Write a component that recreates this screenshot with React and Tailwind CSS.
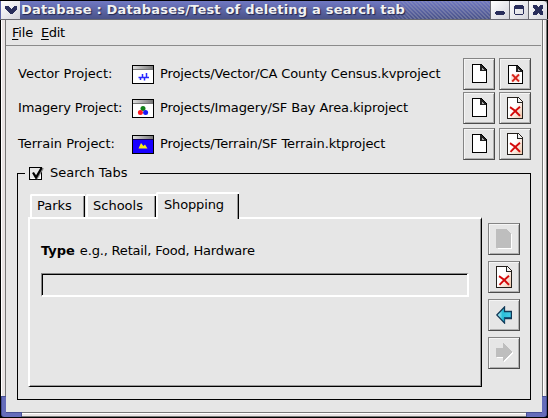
import React from "react";

function Button({ children }) {
  return (
    <button className="flex h-8 w-8 shrink-0 items-center justify-center border border-t-[#858585] border-l-[#858585] border-r-[#4c4c4c] border-b-[#4c4c4c] bg-[#e6e6e6] shadow-[inset_1px_1px_0_#f5f5f5,inset_-1px_-1px_0_#b0b0b0]">
      {children}
    </button>
  );
}

function Svg({ w, h, children, className = "" }) {
  return (
    <svg width={w} height={h} viewBox={`0 0 ${w} ${h}`} shapeRendering="crispEdges" className={`block shrink-0 ${className}`}>
      {children}
    </svg>
  );
}

function NewPage() {
  return (
    <Svg w={16} h={20}>
      <path d="M1.5 .5H10.5L15.5 5.5V18.5H1.5Z" fill="white" stroke="black" />
      <path d="M9 1H10L15 6V7H9Z" fill="#222" />
      <path d="M11 4h1v1h1v1h-2Z" fill="#aaa" />
    </Svg>
  );
}

function SmallDelete() {
  return (
    <Svg w={16} h={20}>
      <path d="M1.5 1.5H10.5L15.5 6.5V19.5H1.5Z" fill="white" stroke="black" />
      <path d="M9 2H10L15 7V8H9Z" fill="#222" />
      <path d="M11 5h1v1h1v1h-2Z" fill="#aaa" />
      <rect x="4" y="10" width="9" height="8" fill="#fbe9e2" />
      <path d="M5.2 10.5L12 17.5M12 10.5L5.2 17.5" stroke="#d8261c" strokeWidth="1.8" shapeRendering="auto" />
    </Svg>
  );
}

function LargeDelete() {
  return (
    <Svg w={16} h={22}>
      <defs>
        <linearGradient id="paper" x1=".1" y1=".2" x2="1" y2="1">
          <stop offset=".35" stopColor="#fff" />
          <stop offset="1" stopColor="#efc3a5" />
        </linearGradient>
      </defs>
      <path d="M.5 .5H11.5L15.5 4.5V21.5H.5Z" fill="url(#paper)" stroke="#241f1b" />
      <path d="M10.5 1V5.5H15" fill="none" stroke="#222" />
      <path d="M11 2L14 5H11Z" fill="#eee" />
      <path d="M3 10.2Q8 13 13 18.8M13 9.8Q8 14 3.5 18.8" fill="none" stroke="#d40a0a" strokeWidth="1.9" shapeRendering="auto" />
    </Svg>
  );
}

function DisabledPage() {
  return (
    <Svg w={16} h={20}>
      <path d="M2 1H11L16 6V20H2Z" fill="white" />
      <path d="M0 0H10L15 5V19H0Z" fill="#bebebe" />
    </Svg>
  );
}

function BackArrow() {
  return (
    <Svg w={16} h={18}>
      <defs>
        <linearGradient id="cyan">
          <stop stopColor="#d0f9ff" />
          <stop offset=".4" stopColor="#28bfd9" />
          <stop offset="1" stopColor="#49cce8" />
        </linearGradient>
      </defs>
      <path d="M.8 9L8.5 1V5.5H15.4V12.5H8.5V17Z" fill="url(#cyan)" stroke="#123957" strokeWidth="1.3" shapeRendering="auto" />
      <path d="M8 11.5H14.5M8.5 12V16" stroke="#10557c" />
    </Svg>
  );
}

function ForwardArrow() {
  return (
    <Svg w={18} h={20} className="translate-x-px">
      <path d="M1 6H8V1L17 10L8 19V15H1Z" fill="white" />
      <path d="M0 5H7V0L16 9L7 18V14H0Z" fill="#bebebe" />
    </Svg>
  );
}

function ProjectIcon({ kind }) {
  return (
    <Svg w={22} h={19} className="ml-auto">
      <defs>
        <linearGradient id="caption">
          <stop stopColor="#ddd" />
          <stop offset="1" stopColor="#777" />
        </linearGradient>
      </defs>
      <rect x=".5" y=".5" width="21" height="18" fill={kind === "terrain" ? "#1800ff" : "white"} stroke="black" />
      <rect x="1" y="1" width="20" height="3" fill="url(#caption)" />
      <path d="M1 4.5H21" stroke={kind === "terrain" ? "#120060" : "#777"} />
      {kind === "vector" && (
        <path d="M6.5 12.5H17M8.5 12V15M10.5 9V13M12.5 12V15.5M14.5 8V13" fill="none" stroke="#2828ff" strokeWidth="1.5" shapeRendering="auto" />
      )}
      {kind === "imagery" && (
        <g shapeRendering="auto">
          <circle cx="11" cy="9.5" r="2.5" fill="#118018" />
          <circle cx="8.4" cy="13.5" r="2.5" fill="#ff1822" />
          <circle cx="13.6" cy="13.5" r="2.5" fill="#1919f4" />
        </g>
      )}
      {kind === "terrain" && <path d="M6.5 13.5L9 8L11.5 11L13 9.5L15.5 13.5Z" fill="#f4ed16" shapeRendering="auto" />}
    </Svg>
  );
}

function ProjectRow({ label, path, kind, labelClass = "", children }) {
  return (
    <div className="flex h-8 items-center">
      <div className="flex w-[136px] items-center">
        <span className={labelClass}>{label}</span>
        <ProjectIcon kind={kind} />
      </div>
      <span className="ml-1.5 grow tracking-[-0.12px]">{path}</span>
      <div className="flex gap-1">
        <Button><NewPage /></Button>
        <Button>{children}</Button>
      </div>
    </div>
  );
}

function TitleBar() {
  const control = "flex h-[18px] items-center justify-center bg-linear-to-br from-white to-[#d5d5dc]";
  return (
    <header className="flex h-5 shrink-0 border-t border-b border-t-black border-b-[#6a6a72] bg-[#5b63a8] pl-px">
      <div className={`${control} w-[19px]`}>
        <Svg w={12} h={8}><path d="M0 0H3L6 3L9 0H12V3L7 8H5L0 3Z" fill="#292e5b" /></Svg>
      </div>
      <div className="relative flex grow items-center bg-linear-to-b from-[#7078c3] to-[#4a5389] pl-px">
        <div className="absolute inset-y-0 right-0 w-[110px] bg-[repeating-linear-gradient(45deg,transparent_0_2px,#9b9eb766_2px_2.83px)] [mask-image:linear-gradient(to_right,transparent,black_30px)]" />
        <span className="relative text-[13px] leading-[18px] font-bold tracking-[0.19px] whitespace-pre text-[#f2f2f2] [text-shadow:1px_1px_1px_#20264f]">Database : Databases/Test of deleting a search tab</span>
      </div>
      <div className="flex gap-px bg-[#6a6a72] pl-px">
        <div className={`${control} w-[18px]`}><Svg w={10} h={10}><path d="M1 6H9V7H10V9H9V10H1V9H0V7H1Z" fill="#292e5b" /></Svg></div>
        <div className={`${control} w-[18px]`}><Svg w={10} h={10}><path d="M1 0H9V1H10V9H9V10H1V9H0V1H1ZM1 4V9H9V4Z" fillRule="evenodd" fill="#292e5b" /></Svg></div>
        <div className={`${control} w-[18px] rounded-tr`}><Svg w={10} h={10}><path d="M0 0H3L5 2L7 0H10V3L8 5L10 7V10H7L5 8L3 10H0V7L2 5L0 3Z" fill="#292e5b" /></Svg></div>
      </div>
      <div className="w-px bg-black" />
    </header>
  );
}

function Tab({ label, className }) {
  return (
    <div className={`rounded-tl-[2px] border-t-2 border-l-2 border-white bg-[#e6e6e6] shadow-[inset_-1px_0_0_#000,inset_-2px_0_0_#999] ${className}`}>
      {label}
    </div>
  );
}

export default function App() {
  return (
    <div className="flex h-[418px] w-[548px] flex-col overflow-hidden bg-black font-['DejaVu_Sans',sans-serif] text-[13px] leading-4 text-black">
      <TitleBar />
      <div className="flex h-[397px]">
        <div className="flex w-1.5 shrink-0 flex-col pl-px">
          <div className="h-[376px] border-r border-l border-r-[#777] border-l-white bg-[#eae5e5]" />
          <div className="grow rounded-bl-[3px] border-t border-l border-[#474f94] bg-[#656cba]" />
        </div>
        <div className="flex w-[536px] flex-col">
          <main className="h-[392px] bg-[#e6e6e6]">
            <nav className="flex h-[26px] w-[535px] gap-[9px] border-b border-[#8b8b8b] pt-[5px] pl-1.5">
              <span className="w-5 tracking-[-0.2px]"><u className="underline-offset-2">F</u>ile</span>
              <span className="tracking-[-0.4px]"><u className="underline-offset-2">E</u>dit</span>
            </nav>
            <section className="pt-3 pr-[11px] pl-3">
              <ProjectRow label="Vector Project:" path="Projects/Vector/CA County Census.kvproject" kind="vector"><SmallDelete /></ProjectRow>
              <div className="h-0.5" />
              <ProjectRow label="Imagery Project:" labelClass="tracking-[-0.15px]" path="Projects/Imagery/SF Bay Area.kiproject" kind="imagery"><LargeDelete /></ProjectRow>
              <div className="h-1" />
              <ProjectRow label="Terrain Project:" path="Projects/Terrain/SF Terrain.ktproject" kind="terrain"><LargeDelete /></ProjectRow>
            </section>
            <section className="mt-[13px] ml-[11px] h-[227px] w-[514px] border border-black pr-2.5 pl-2.5">
              <div className="-mt-2 -ml-[3px] flex h-4 w-[115px] items-center bg-[#e6e6e6] pl-1">
                <Svg w={15} h={14}>
                  <path d="M.5 .5H12.5V12.5H.5Z" fill="#e6e6e6" stroke="#000" />
                  <path d="M2 11.5H11.5V2" fill="none" stroke="#fff" />
                  <path d="M5 7L8 11L14 1" fill="none" stroke="#888" strokeWidth="2" shapeRendering="auto" />
                  <path d="M4 5.5L7 10.5L12.5 1" fill="none" stroke="#000" strokeWidth="2.2" shapeRendering="auto" />
                </Svg>
                <span className="ml-[6px] -translate-y-px">Search Tabs</span>
              </div>
              <div className="mt-2.5 flex gap-1.5">
                <div className="w-[454px]">
                  <div className="relative z-10 flex h-[25px] items-end pl-0.5">
                    <Tab label="Parks" className="h-[23px] w-[55px] pt-0.5 pl-[5px]" />
                    <Tab label="Schools" className="ml-px h-[23px] w-[70px] pt-0.5 pl-[5px]" />
                    <Tab label="Shopping" className="-mb-0.5 h-[27px] w-[83px] pt-[3px] pl-1.5 tracking-[-0.15px]" />
                  </div>
                  <div className="h-[170px] border-t-2 border-r border-b border-l-2 border-t-white border-r-black border-b-black border-l-white shadow-[inset_-1px_-1px_0_#999]">
                    <div className="pt-6 pl-[11px]"><b>Type</b><span className="ml-px tracking-[-0.18px]"> e.g., Retail, Food, Hardware</span></div>
                    <div className="mt-[14px] ml-[11px] h-6 w-[428px] border-t border-r-2 border-b-2 border-l border-t-[#888] border-r-white border-b-white border-l-[#888] shadow-[inset_1px_1px_0_#000]" />
                  </div>
                </div>
                <div className="flex flex-col gap-1.5 pt-[31px]">
                  <Button><DisabledPage /></Button>
                  <Button><LargeDelete /></Button>
                  <Button><BackArrow /></Button>
                  <Button><ForwardArrow /></Button>
                </div>
              </div>
            </section>
          </main>
          <div className="flex h-[5px]">
            <div className="w-4 border-t border-r border-[#474f94] bg-[#656cba]" />
            <div className="grow border-t border-b border-t-[#777] border-b-[#777] bg-[#eae5e5] shadow-[inset_0_1px_0_#fff]" />
            <div className="w-4 border-t border-l border-[#474f94] bg-[#656cba]" />
          </div>
        </div>
        <div className="flex w-[6px] shrink-0 flex-col pr-px">
          <div className="h-[376px] border-r border-l border-[#777] bg-[#eae5e5] shadow-[inset_1px_0_0_#fff]" />
          <div className="grow rounded-br-[3px] border-t border-r border-[#474f94] bg-[#656cba]" />
        </div>
      </div>
    </div>
  );
}
